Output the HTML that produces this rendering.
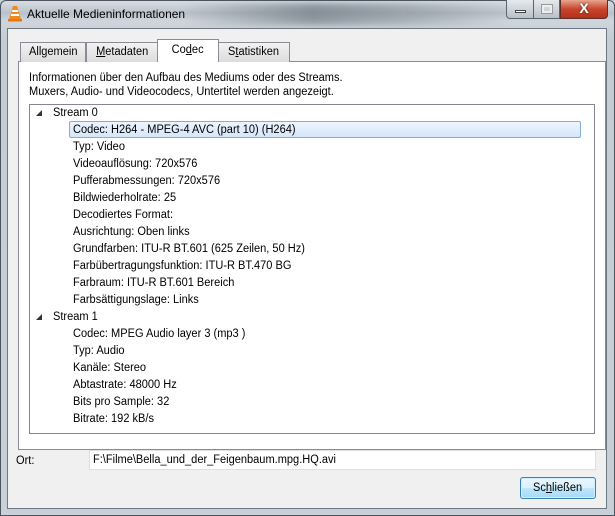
<!DOCTYPE html>
<html><head><meta charset="utf-8"><style>
*{margin:0;padding:0;box-sizing:border-box}
body{width:615px;height:516px;overflow:hidden;font-family:"Liberation Sans",sans-serif;font-size:11.5px;color:#000;position:relative;background:#c9d1d9}
.s{display:inline-block;transform:scaleX(0.96);transform-origin:0 50%;white-space:nowrap}
.c{display:inline-block;transform:scaleX(0.96);transform-origin:50% 50%;white-space:nowrap}
.frame{position:absolute;left:0;top:0;width:615px;height:516px;border:1px solid #4a5560;border-radius:6px 6px 0 0;background:linear-gradient(180deg,#d8dde2 0,#b9c2cb 12px,#cfd5db 20px,#c4ccd4 40px,#c9d0d7 100%)}
.streak{position:absolute;top:2px;left:180px;width:330px;height:22px;background:linear-gradient(90deg,rgba(90,100,110,0) 0,rgba(70,80,90,.45) 40%,rgba(90,100,110,.3) 70%,rgba(90,100,110,0));filter:blur(3px)}
.title{position:absolute;left:27px;top:7px;font-size:12px;color:#000}
.client{position:absolute;left:7px;top:28px;width:600px;height:481px;background:#f0f0f0;border:1px solid #6e7883}
.tab{position:absolute;height:20px;border:1px solid #898c95;border-bottom:none;background:linear-gradient(#f2f2f2,#dcdcdc);text-align:center;line-height:18px}
.panel{position:absolute;left:18px;top:61px;width:588px;height:389px;background:#fff;border:1px solid #898c95}
.tree{position:absolute;left:29px;top:104px;width:566px;height:330px;border:1px solid #828790;background:#fff}
.row{position:absolute;height:17px;line-height:17px;white-space:nowrap}
</style></head><body>
<div class="frame"><div class="streak"></div></div>
<svg style="position:absolute;left:7px;top:5px" width="16" height="17" viewBox="0 0 16 17"><path d="M6 1h4l4 13H2z" fill="#f08a1c"/><path d="M5.3 5h5.4l.6 2H4.7zM4.2 9h7.6l.6 2H3.6z" fill="#fff"/><rect x="1" y="14" width="14" height="2.5" fill="#e2761a"/></svg>
<div class="title">Aktuelle Medieninformationen</div>
<div style="position:absolute;left:506px;top:0;width:28px;height:19px;border:1px solid #5a6470;border-top:none;border-radius:0 0 0 4px;background:linear-gradient(#e6e9ec,#b8c0c8)"><div style="position:absolute;left:8px;top:10px;width:11px;height:3px;background:#fff;border:1px solid #444"></div></div>
<div style="position:absolute;left:533px;top:0;width:27px;height:19px;border:1px solid #5a6470;border-top:none;background:linear-gradient(#e6e9ec,#b8c0c8)"><div style="position:absolute;left:8px;top:5px;width:10px;height:8px;border:2px solid #eee;outline:1px solid #999"></div></div>
<div style="position:absolute;left:560px;top:0;width:48px;height:19px;border:1px solid #5a3028;border-top:none;border-radius:0 0 4px 0;background:linear-gradient(#e8a590,#c8452c 50%,#b6301c);color:#fff;font-weight:bold;font-size:14px;text-align:center;line-height:17px;text-shadow:0 0 2px #333">X</div>
<div class="client"></div>
<div class="panel"></div>
<div class="tab" style="left:20px;top:42px;width:66px"><span class="c">Allgemein</span></div>
<div class="tab" style="left:86px;top:42px;width:72px"><span class="c"><u>M</u>etadaten</span></div>
<div class="tab" style="left:218px;top:42px;width:72px"><span class="c">S<u>t</u>atistiken</span></div>
<div class="tab" style="left:157px;top:39px;width:62px;height:23px;background:#fff;line-height:21px"><span class="c">Co<u>d</u>ec</span></div>
<div style="position:absolute;left:29px;top:71px;line-height:14px"><span class="s">Informationen über den Aufbau des Mediums oder des Streams.</span><br><span class="s">Muxers, Audio- und Videocodecs, Untertitel werden angezeigt.</span></div>
<div class="tree"></div>
<div style="position:absolute;left:69px;top:121px;width:512px;height:17px;border:1px solid #84acdd;border-radius:2px;background:linear-gradient(#eef5fd,#d5e6fa)"></div>
<div style="position:absolute;left:36px;top:110px;width:0;height:0;border-left:6px solid transparent;border-bottom:6px solid #333"></div>
<div style="position:absolute;left:36px;top:314px;width:0;height:0;border-left:6px solid transparent;border-bottom:6px solid #333"></div>
<div class="row" style="left:53px;top:105px"><span class="s">Stream 0</span></div>
<div class="row" style="left:73px;top:122px"><span class="s">Codec: H264 - MPEG-4 AVC (part 10) (H264)</span></div>
<div class="row" style="left:73px;top:139px"><span class="s">Typ: Video</span></div>
<div class="row" style="left:73px;top:156px"><span class="s">Videoauflösung: 720x576</span></div>
<div class="row" style="left:73px;top:173px"><span class="s">Pufferabmessungen: 720x576</span></div>
<div class="row" style="left:73px;top:190px"><span class="s">Bildwiederholrate: 25</span></div>
<div class="row" style="left:73px;top:207px"><span class="s">Decodiertes Format:</span></div>
<div class="row" style="left:73px;top:224px"><span class="s">Ausrichtung: Oben links</span></div>
<div class="row" style="left:73px;top:241px"><span class="s">Grundfarben: ITU-R BT.601 (625 Zeilen, 50 Hz)</span></div>
<div class="row" style="left:73px;top:258px"><span class="s">Farbübertragungsfunktion: ITU-R BT.470 BG</span></div>
<div class="row" style="left:73px;top:275px"><span class="s">Farbraum: ITU-R BT.601 Bereich</span></div>
<div class="row" style="left:73px;top:292px"><span class="s">Farbsättigungslage: Links</span></div>
<div class="row" style="left:53px;top:309px"><span class="s">Stream 1</span></div>
<div class="row" style="left:73px;top:326px"><span class="s">Codec: MPEG Audio layer 3 (mp3 )</span></div>
<div class="row" style="left:73px;top:343px"><span class="s">Typ: Audio</span></div>
<div class="row" style="left:73px;top:360px"><span class="s">Kanäle: Stereo</span></div>
<div class="row" style="left:73px;top:377px"><span class="s">Abtastrate: 48000 Hz</span></div>
<div class="row" style="left:73px;top:394px"><span class="s">Bits pro Sample: 32</span></div>
<div class="row" style="left:73px;top:411px"><span class="s">Bitrate: 192 kB/s</span></div>
<div style="position:absolute;left:16px;top:455px"><span class="s">Ort:</span></div>
<div style="position:absolute;left:89px;top:450px;width:507px;height:20px;border:1px solid #dcdfe3;background:#fff;padding-left:3px;line-height:18px"><span class="s">F:\Filme\Bella_und_der_Feigenbaum.mpg.HQ.avi</span></div>
<div style="position:absolute;left:520px;top:477px;width:76px;height:22px;border:1px solid #3c7fb1;border-radius:3px;background:linear-gradient(#eaf6fd 0,#d9f0fc 50%,#bee6fd 51%,#a7d9f5);text-align:center;line-height:20px;box-shadow:inset 0 0 0 1px #cfeefd"><span class="c">Sc<u>h</u>ließen</span></div>
</body></html>
